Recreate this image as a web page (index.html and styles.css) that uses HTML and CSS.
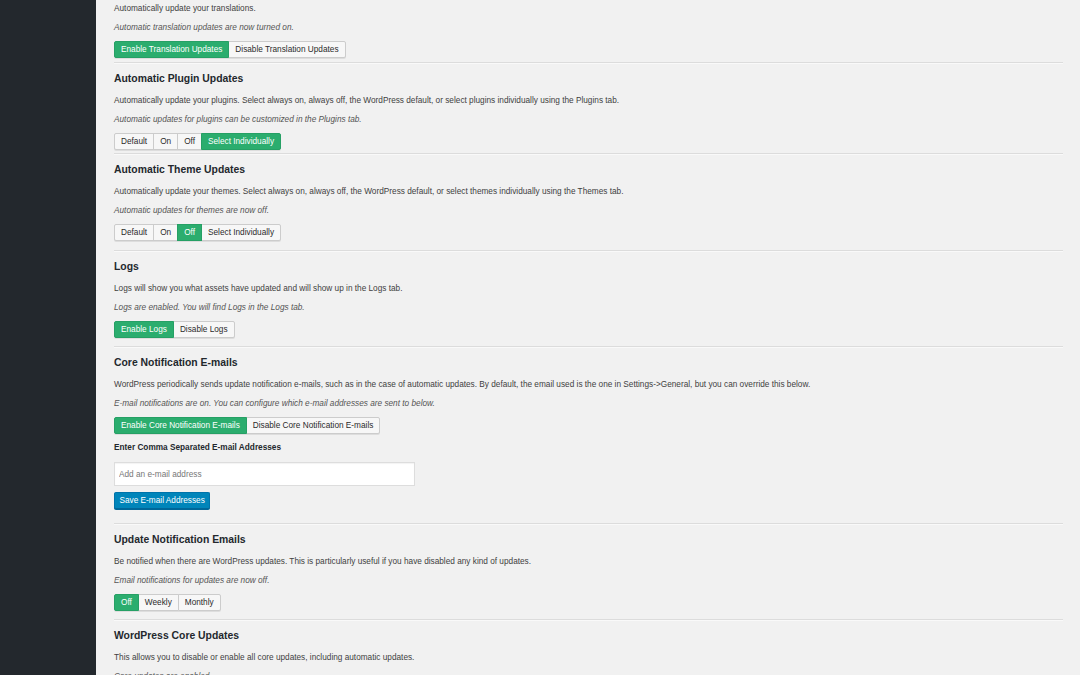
FILE: index.html
```html
<!DOCTYPE html>
<html lang="en">
<head>
  <meta charset="UTF-8">
  <meta name="viewport" content="width=device-width, initial-scale=1.0">
  <title>Update Settings</title>
  <link rel="stylesheet" href="styles.css">
</head>
<body>

  <div class="admin">
    <!-- dark admin menu column -->
    <div class="sidebar"></div>

    <div class="content">

      <!-- Translations (heading scrolled out of view) -->
      <div class="section first pad-4">
        <p class="desc">Automatically update your translations.</p>
        <p class="status">Automatic translation updates are now turned on.</p>
        <div class="btn-group">
          <button class="active">Enable Translation Updates</button>
          <button>Disable Translation Updates</button>
        </div>
      </div>
      <hr>

      <div class="section pad-3">
        <h2>Automatic Plugin Updates</h2>
        <p class="desc">Automatically update your plugins. Select always on, always off, the WordPress default, or select plugins individually using the Plugins tab.</p>
        <p class="status">Automatic updates for plugins can be customized in the Plugins tab.</p>
        <div class="btn-group">
          <button>Default</button>
          <button>On</button>
          <button>Off</button>
          <button class="active">Select Individually</button>
        </div>
      </div>
      <hr>

      <div class="section pad-9">
        <h2>Automatic Theme Updates</h2>
        <p class="desc">Automatically update your themes. Select always on, always off, the WordPress default, or select themes individually using the Themes tab.</p>
        <p class="status">Automatic updates for themes are now off.</p>
        <div class="btn-group">
          <button>Default</button>
          <button>On</button>
          <button class="active">Off</button>
          <button>Select Individually</button>
        </div>
      </div>
      <hr>

      <div class="section pad-8">
        <h2>Logs</h2>
        <p class="desc">Logs will show you what assets have updated and will show up in the Logs tab.</p>
        <p class="status">Logs are enabled. You will find Logs in the Logs tab.</p>
        <div class="btn-group">
          <button class="active">Enable Logs</button>
          <button>Disable Logs</button>
        </div>
      </div>
      <hr>

      <div class="section pad-14">
        <h2>Core Notification E-mails</h2>
        <p class="desc">WordPress periodically sends update notification e-mails, such as in the case of automatic updates. By default, the email used is the one in Settings-&gt;General, but you can override this below.</p>
        <p class="status">E-mail notifications are on. You can configure which e-mail addresses are sent to below.</p>
        <div class="btn-group">
          <button class="active">Enable Core Notification E-mails</button>
          <button>Disable Core Notification E-mails</button>
        </div>
        <label class="field-label" for="emails">Enter Comma Separated E-mail Addresses</label>
        <input type="text" id="emails" class="email-input" placeholder="Add an e-mail address">
        <button class="btn-primary">Save E-mail Addresses</button>
      </div>
      <hr>

      <div class="section pad-8">
        <h2>Update Notification Emails</h2>
        <p class="desc">Be notified when there are WordPress updates. This is particularly useful if you have disabled any kind of updates.</p>
        <p class="status">Email notifications for updates are now off.</p>
        <div class="btn-group">
          <button class="active">Off</button>
          <button>Weekly</button>
          <button>Monthly</button>
        </div>
      </div>
      <hr>

      <div class="section">
        <h2>WordPress Core Updates</h2>
        <p class="desc">This allows you to disable or enable all core updates, including automatic updates.</p>
        <p class="status">Core updates are enabled.</p>
      </div>

    </div>
  </div>

</body>
</html>
```

FILE: styles.css
```css
/* page is a scrolled admin screen, so clip at the window */
body {
  margin: 0;
  height: 675px;
  overflow: hidden;
  background-color: #f1f1f1;
  font-family: "Liberation Sans", Arial, sans-serif;
  font-size: 8.25px;
  color: #3f3f3f;
}

.admin {
  display: flex;
  height: 100%;
}

.sidebar {
  width: 96px;
  flex-shrink: 0;
  background-color: #23282d;
}

.content {
  flex: 1;
  padding: 0 17px 0 18px;
}

.section {
  display: flex;
  flex-direction: column;
  align-items: flex-start;
  padding-top: 8px;
}

.section.first {
  padding-top: 3px;
}

/* bottom spacing differs a little per block */
.pad-3 { padding-bottom: 3px; }
.pad-4 { padding-bottom: 4px; }
.pad-8 { padding-bottom: 8px; }
.pad-9 { padding-bottom: 9px; }
.pad-14 { padding-bottom: 14px; }

hr {
  margin: 0;
  border: none;
  border-top: 1px solid #dcdcdc;
  border-bottom: 1px solid #f9f9f9;
}

h2 {
  margin: 0 0 9px;
  font-size: 10.4px;
  line-height: 14px;
  font-weight: bold;
  color: #23282d;
}

p {
  margin: 0;
  line-height: 12px;
}

.desc {
  margin-bottom: 7px;
}

.status {
  font-style: italic;
  color: #555;
  margin-bottom: 7px;
}

.btn-group {
  display: flex;
}

.btn-group button {
  font-family: inherit;
  font-size: 8.25px;
  line-height: 15px;
  padding: 0 6px;
  margin: 0 0 0 -1px;
  background: #f7f7f7;
  color: #2b2b2b;
  border: 1px solid #ccc;
  border-radius: 0;
  box-shadow: 0 1px 0 #ddd;
  cursor: pointer;
}

.btn-group button:first-child {
  margin-left: 0;
  border-radius: 2px 0 0 2px;
}

.btn-group button:last-child {
  border-radius: 0 2px 2px 0;
}

/* selected option in the group */
.btn-group button.active {
  background: #2bad6e;
  border-color: #26a065;
  color: #fff;
  position: relative;
}

.field-label {
  margin-top: 8px;
  font-weight: bold;
  line-height: 12px;
  color: #23282d;
}

.email-input {
  margin-top: 8px;
  width: 301px;
  height: 24px;
  box-sizing: border-box;
  padding: 0 4px;
  font-family: inherit;
  font-size: 8.25px;
  border: 1px solid #ddd;
  background: #fff;
  box-shadow: inset 0 1px 1px rgba(0, 0, 0, 0.05);
}

.email-input::placeholder {
  color: #777;
}

.btn-primary {
  margin-top: 6px;
  font-family: inherit;
  font-size: 8.25px;
  line-height: 15px;
  padding: 0 4.5px;
  background: #0085ba;
  color: #fff;
  border: 1px solid #0073aa;
  border-bottom-color: #006799;
  border-radius: 2px;
  box-shadow: 0 1px 0 #006799;
  cursor: pointer;
}
```
